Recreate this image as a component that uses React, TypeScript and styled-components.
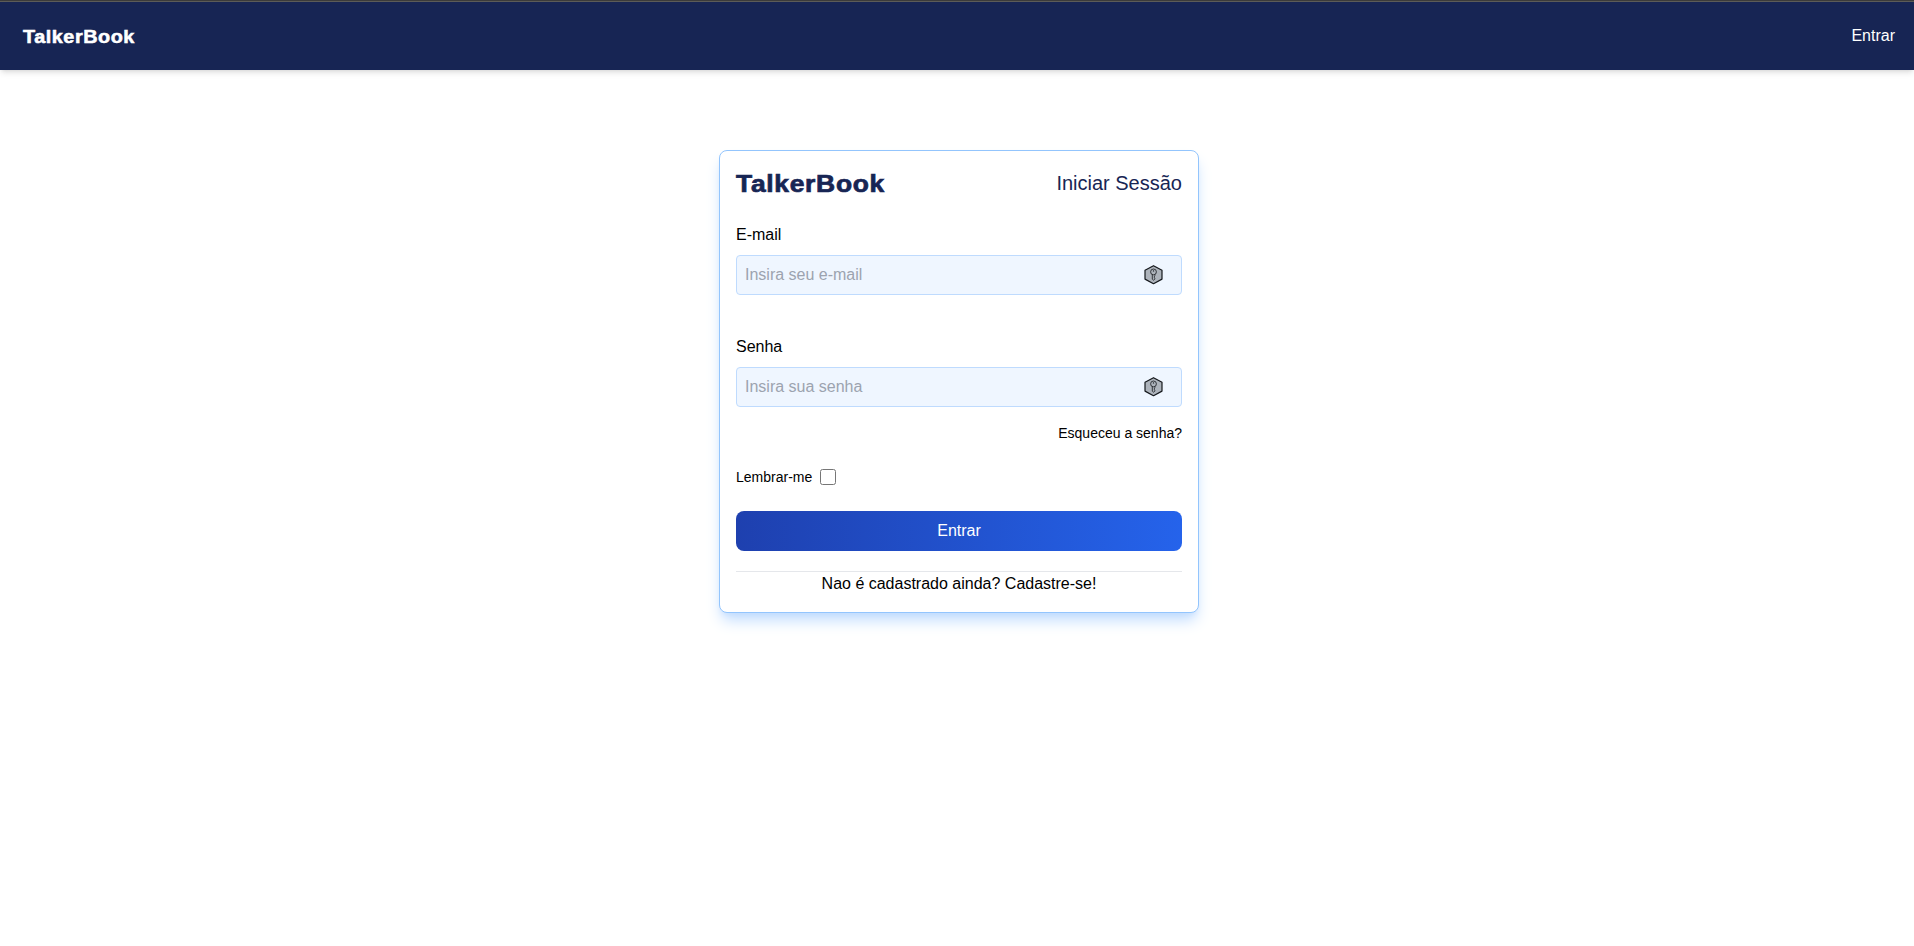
import React from "react";
import styled, { createGlobalStyle } from "styled-components";

const GlobalStyle = createGlobalStyle`
  *, *::before, *::after { box-sizing: border-box; }
  body {
    margin: 0;
    background: #fff;
    color: #000;
    font-family: Arial, "Liberation Sans", sans-serif;
    font-size: 16px;
    line-height: 24px;
  }
  a { color: inherit; text-decoration: none; }
`;

const Page = styled.div`
  display: flex;
  flex-direction: column;
  min-height: 100vh;
`;

const Navbar = styled.header`
  display: flex;
  align-items: center;
  justify-content: space-between;
  height: 70px;
  padding: 2px 19px 0 23px;
  background: linear-gradient(#3b3b3b 1px, #5c5c58 1px, #5c5c58 2px, #172554 2px);
  color: #fff;
  box-shadow: 0 4px 6px -1px rgba(0, 0, 0, 0.1), 0 2px 4px -2px rgba(0, 0, 0, 0.1);
`;

const Brand = styled.span<{ $size: number; $spacing: number }>`
  padding-top: 2px;
  font-size: ${(p) => p.$size}px;
  line-height: 32px;
  font-weight: 900;
  letter-spacing: ${(p) => p.$spacing}px;
  -webkit-text-stroke: ${(p) => p.$size * 0.03}px currentColor;
  transform: scaleX(1.1);
  transform-origin: left center;
`;

const Main = styled.main`
  display: flex;
  justify-content: center;
  padding: 80px 0 0 4px;
`;

const Card = styled.form`
  display: flex;
  flex-direction: column;
  width: 480px;
  padding: 16px;
  border: 1px solid #93c5fd;
  border-radius: 8px;
  background: #fff;
  box-shadow: 0 10px 15px -3px #bfdbfe, 0 4px 6px -4px #bfdbfe;
`;

const CardHeader = styled.div`
  display: flex;
  align-items: center;
  justify-content: space-between;
  height: 32px;
  margin-bottom: 24px;
  color: #172554;
`;

const Title = styled.h1`
  margin: 0;
  font-size: 20px;
  line-height: 28px;
  font-weight: 400;
`;

const Field = styled.div<{ $gap: number }>`
  display: flex;
  flex-direction: column;
  gap: 8px;
  margin-bottom: ${(p) => p.$gap}px;
`;

const InputBox = styled.div`
  display: flex;
  align-items: center;
  height: 40px;
  padding: 0 17px 0 8px;
  border: 1px solid #bfdbfe;
  border-radius: 4px;
  background: #eff6ff;
`;

const Input = styled.input`
  flex: 1;
  min-width: 0;
  padding: 0;
  border: 0;
  outline: 0;
  background: transparent;
  font: inherit;
  &::placeholder { color: #9ca3af; opacity: 1; }
`;

const Forgot = styled.a`
  align-self: flex-end;
  margin-bottom: 24px;
  font-size: 14px;
  line-height: 20px;
`;

const Remember = styled.label`
  display: flex;
  align-items: center;
  gap: 8px;
  height: 20px;
  margin-bottom: 24px;
  font-size: 14px;
  line-height: 20px;
`;

const Checkbox = styled.input`
  width: 16px;
  height: 16px;
  margin: 0;
`;

const Submit = styled.button`
  height: 40px;
  margin-bottom: 20px;
  padding: 0;
  border: 0;
  border-radius: 8px;
  background: linear-gradient(to right, #1e40af, #2563eb);
  color: #fff;
  font: inherit;
`;

const Footer = styled.div`
  border-top: 1px solid #e5e7eb;
  text-align: center;
`;

const KeyIcon = () => (
  <svg width="20" height="20" viewBox="0 0 20 20" fill="none" stroke="#15181c" aria-hidden="true">
    <path d="M9.5 0.7 18 5.2v8.9L9.5 18.7 1 14.1V5.2Z" fill="#adb3bb" strokeWidth="1.2" strokeLinejoin="round" />
    <path d="M8.3 9v5.2l1.3 1 1.2-1v-.8l-.5-.7.5-.7-.5-.8.5-.6V9" strokeWidth="0.8" />
    <circle cx="9.5" cy="6.9" r="2.9" fill="#adb3bb" strokeWidth="0.8" />
    <circle cx="9.5" cy="5.9" r="0.7" fill="#15181c" stroke="none" />
  </svg>
);

export default function App() {
  return (
    <>
      <GlobalStyle />
      <Page>
        <Navbar>
          <Brand $size={18} $spacing={0.5}>TalkerBook</Brand>
          <a href="#entrar">Entrar</a>
        </Navbar>
        <Main>
          <Card>
            <CardHeader>
              <Brand $size={24} $spacing={0.65}>TalkerBook</Brand>
              <Title>Iniciar Sessão</Title>
            </CardHeader>
            <Field $gap={40}>
              <label htmlFor="email">E-mail</label>
              <InputBox>
                <Input id="email" type="email" placeholder="Insira seu e-mail" />
                <KeyIcon />
              </InputBox>
            </Field>
            <Field $gap={16}>
              <label htmlFor="senha">Senha</label>
              <InputBox>
                <Input id="senha" type="password" placeholder="Insira sua senha" />
                <KeyIcon />
              </InputBox>
            </Field>
            <Forgot href="#senha">Esqueceu a senha?</Forgot>
            <Remember>
              Lembrar-me
              <Checkbox type="checkbox" />
            </Remember>
            <Submit type="button">Entrar</Submit>
            <Footer>
              Nao é cadastrado ainda? <a href="#cadastro">Cadastre-se!</a>
            </Footer>
          </Card>
        </Main>
      </Page>
    </>
  );
}
